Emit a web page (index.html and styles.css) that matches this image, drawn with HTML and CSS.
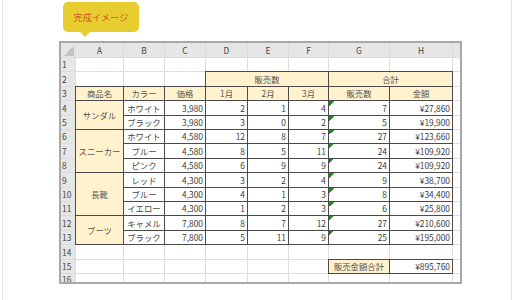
FILE: index.html
```html
<!DOCTYPE html>
<html lang="ja">
<head>
<meta charset="utf-8">
<link rel="stylesheet" href="styles.css">
</head>
<body>
<div class="page">
  <div class="badge">完成イメージ</div>
  <div class="sheet">
    <div class="corner"></div><div class="ch">A</div><div class="ch">B</div><div class="ch">C</div><div class="ch">D</div><div class="ch">E</div><div class="ch">F</div><div class="ch">G</div><div class="ch">H</div><div class="ch"></div>

    <div class="rh">1</div><div class="c"></div><div class="c"></div><div class="c"></div><div class="c"></div><div class="c"></div><div class="c"></div><div class="c"></div><div class="c"></div><div class="c"></div>

    <div class="rh">2</div><div class="c"></div><div class="c"></div><div class="c"></div><div class="c bx hd cs3">販売数</div><div class="c bx hd cs2">合計</div><div class="c"></div>

    <div class="rh">3</div><div class="c bx hd">商品名</div><div class="c bx hd">カラー</div><div class="c bx hd">価格</div><div class="c bx hd">1月</div><div class="c bx hd">2月</div><div class="c bx hd">3月</div><div class="c bx hd">販売数</div><div class="c bx hd">金額</div><div class="c"></div>

    <div class="rh">4</div><div class="c bx hd rs2">サンダル</div><div class="c bx ct">ホワイト</div><div class="c bx n">3,980</div><div class="c bx n">2</div><div class="c bx n">1</div><div class="c bx n">4</div><div class="c bx n err">7</div><div class="c bx n">¥27,860</div><div class="c"></div>

    <div class="rh">5</div><div class="c bx ct">ブラック</div><div class="c bx n">3,980</div><div class="c bx n">3</div><div class="c bx n">0</div><div class="c bx n">2</div><div class="c bx n err">5</div><div class="c bx n">¥19,900</div><div class="c"></div>

    <div class="rh">6</div><div class="c bx hd rs3">スニーカー</div><div class="c bx ct">ホワイト</div><div class="c bx n">4,580</div><div class="c bx n">12</div><div class="c bx n">8</div><div class="c bx n">7</div><div class="c bx n err">27</div><div class="c bx n">¥123,660</div><div class="c"></div>

    <div class="rh">7</div><div class="c bx ct">ブルー</div><div class="c bx n">4,580</div><div class="c bx n">8</div><div class="c bx n">5</div><div class="c bx n">11</div><div class="c bx n err">24</div><div class="c bx n">¥109,920</div><div class="c"></div>

    <div class="rh">8</div><div class="c bx ct">ピンク</div><div class="c bx n">4,580</div><div class="c bx n">6</div><div class="c bx n">9</div><div class="c bx n">9</div><div class="c bx n err">24</div><div class="c bx n">¥109,920</div><div class="c"></div>

    <div class="rh">9</div><div class="c bx hd rs3">長靴</div><div class="c bx ct">レッド</div><div class="c bx n">4,300</div><div class="c bx n">3</div><div class="c bx n">2</div><div class="c bx n">4</div><div class="c bx n err">9</div><div class="c bx n">¥38,700</div><div class="c"></div>

    <div class="rh">10</div><div class="c bx ct">ブルー</div><div class="c bx n">4,300</div><div class="c bx n">4</div><div class="c bx n">1</div><div class="c bx n">3</div><div class="c bx n err">8</div><div class="c bx n">¥34,400</div><div class="c"></div>

    <div class="rh">11</div><div class="c bx ct">イエロー</div><div class="c bx n">4,300</div><div class="c bx n">1</div><div class="c bx n">2</div><div class="c bx n">3</div><div class="c bx n err">6</div><div class="c bx n">¥25,800</div><div class="c"></div>

    <div class="rh">12</div><div class="c bx hd rs2">ブーツ</div><div class="c bx ct">キャメル</div><div class="c bx n">7,800</div><div class="c bx n">8</div><div class="c bx n">7</div><div class="c bx n">12</div><div class="c bx n err">27</div><div class="c bx n">¥210,600</div><div class="c"></div>

    <div class="rh">13</div><div class="c bx ct">ブラック</div><div class="c bx n">7,800</div><div class="c bx n">5</div><div class="c bx n">11</div><div class="c bx n">9</div><div class="c bx n err">25</div><div class="c bx n">¥195,000</div><div class="c"></div>

    <div class="rh">14</div><div class="c"></div><div class="c"></div><div class="c"></div><div class="c"></div><div class="c"></div><div class="c"></div><div class="c"></div><div class="c"></div><div class="c"></div>

    <div class="rh">15</div><div class="c"></div><div class="c"></div><div class="c"></div><div class="c"></div><div class="c"></div><div class="c"></div><div class="c bx hd">販売金額合計</div><div class="c bx n">¥895,760</div><div class="c"></div>

    <div class="rh rh-cut">16</div><div class="c"></div><div class="c"></div><div class="c"></div><div class="c"></div><div class="c"></div><div class="c"></div><div class="c"></div><div class="c"></div><div class="c"></div>
  </div>
</div>
</body>
</html>
```
FILE: styles.css
```css
html, body {
  margin: 0;
  padding: 0;
  background: #ffffff;
}

body {
  font-family: "Noto Sans CJK JP", "Noto Sans", sans-serif;
}

.page {
  margin-left: 2px;
  width: 508px;
  height: 300px;
  border-left: 1px solid #e3e3e3;
  border-right: 1px solid #e3e3e3;
  padding: 2px 0 0 56px;
  box-sizing: border-box;
  width: 510px;
  overflow: hidden;
}

.badge {
  position: relative;
  margin-left: 4px;
  width: 76px;
  height: 30px;
  background: #e8cd30;
  border-radius: 5px;
  display: flex;
  align-items: center;
  justify-content: center;
  color: #d2561c;
  font-size: 9px;
  letter-spacing: 0.2px;
}

.badge::after {
  content: "";
  position: absolute;
  left: 17px;
  top: 100%;
  border-left: 5px solid transparent;
  border-right: 5px solid transparent;
  border-top: 5px solid #e8cd30;
}

.sheet {
  margin-top: 9px;
  display: inline-grid;
  grid-template-columns: 14px 47px 40px 40px 41px 40px 39px 60px 62px 7px;
  grid-template-rows: 14px 13px 14px 13px 14px 13px 13px 14px 13px 14px 13px 13px 14px 13px 14px 13px 8px;
  gap: 1px;
  background: #dcdcdc;
  border: 2px solid #a8a8a8;
  font-size: 8.4px;
  line-height: 1;
  color: #3a3a3a;
}

.sheet > div {
  display: flex;
  align-items: center;
  overflow: hidden;
  white-space: nowrap;
}

.corner {
  background:
    linear-gradient(to top left, #c2c2c2 50%, transparent 50%) no-repeat right 1px bottom 1px / 10px 10px,
    #e6e6e6;
}

.ch {
  background: #e6e6e6;
  justify-content: center;
  color: #444;
}

.rh {
  background: #e6e6e6;
  padding-left: 1px;
  color: #444;
}

.rh-cut {
  align-items: flex-start !important;
  padding-top: 1px;
}

.c {
  background: #ffffff;
}

.bx {
  box-shadow: 0 0 0 1px #4a4a4a;
}

.hd {
  background: #fff2cc;
  justify-content: center;
  color: #555;
}

.ct {
  justify-content: center;
  color: #444;
}

.n {
  justify-content: flex-end;
  padding-right: 2px;
}

.err {
  background:
    linear-gradient(135deg, #1f8a1f 50%, transparent 50%) no-repeat 0 0 / 5px 5px,
    #ffffff;
}

.cs2 { grid-column: span 2; }
.cs3 { grid-column: span 3; }
.rs2 { grid-row: span 2; }
.rs3 { grid-row: span 3; }
```
